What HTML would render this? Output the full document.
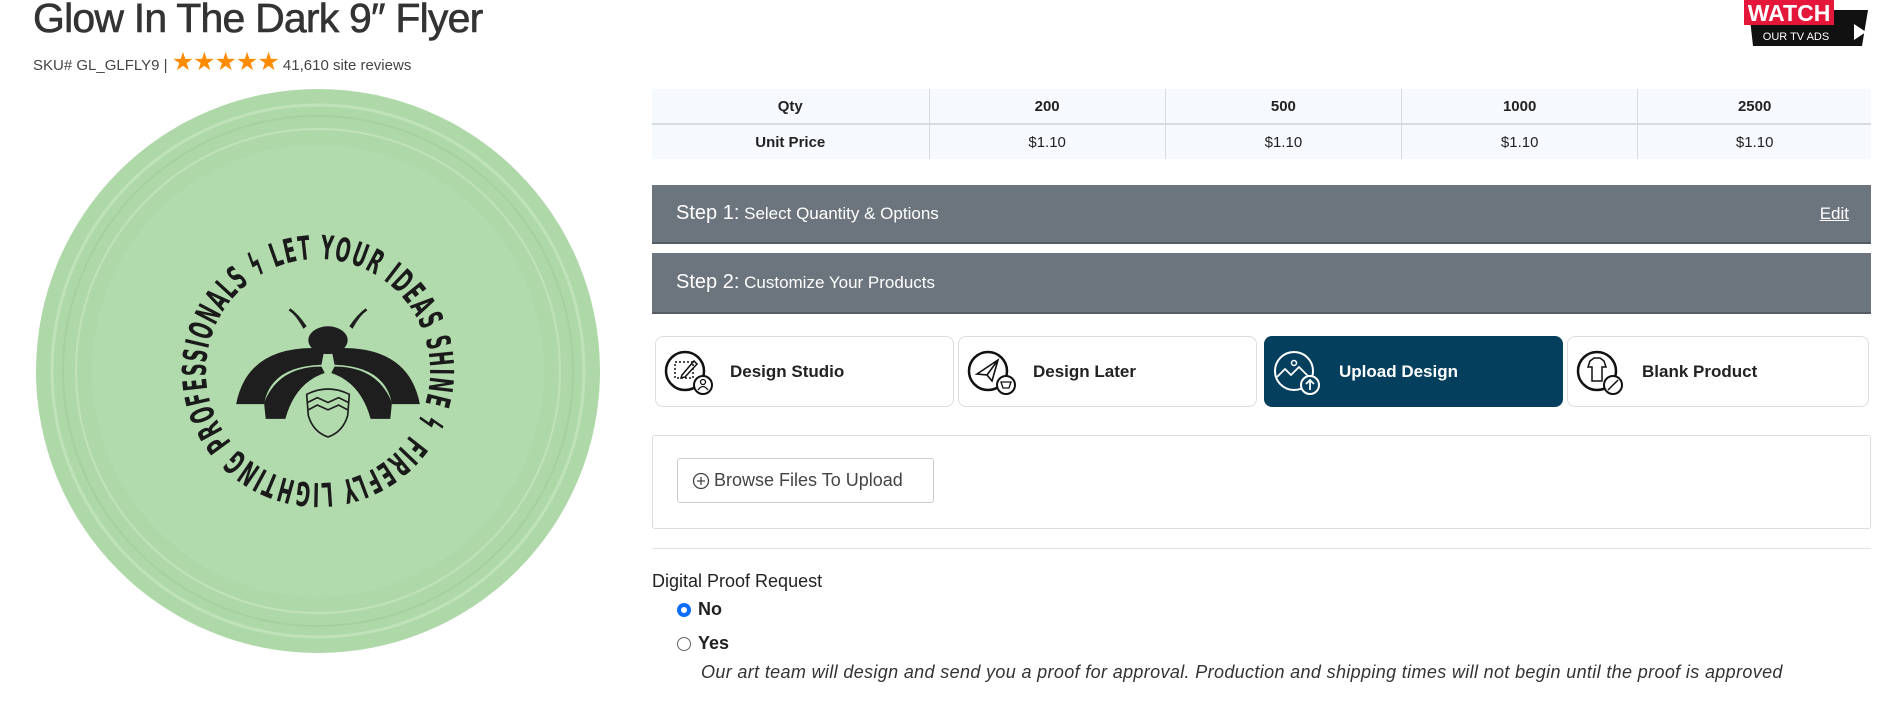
<!DOCTYPE html>
<html><head><meta charset="utf-8"><style>
*{margin:0;padding:0;box-sizing:border-box}
body{width:1902px;height:702px;overflow:hidden;background:#fff;font-family:"Liberation Sans",sans-serif;color:#333;position:relative}
.a{position:absolute}
h1{position:absolute;left:33px;top:-5px;font-size:41px;font-weight:normal;color:#333;letter-spacing:-0.8px;white-space:nowrap;-webkit-text-stroke:0.6px #333}
.sku{left:33px;top:47px;font-size:15px;color:#444;white-space:nowrap}
.stars{color:#ff8c00;font-size:25px;letter-spacing:-1px}
table{position:absolute;left:652px;top:89px;width:1219px;border-collapse:collapse;background:#f6f9fd;font-size:15px}
td{height:35px;text-align:center;border-left:1px solid #d8dce0;color:#222}
tr:first-child td{border-bottom:2px solid #d8dce0;height:35px;font-weight:bold}
td:first-child{border-left:none;font-weight:bold}
.step{left:652px;width:1219px;background:#6c757d;color:#fff;border-bottom:2px solid #555c63}
.step span.s{font-size:20px}
.step{font-size:17px;padding-left:24px;display:flex;align-items:center}
.btn{top:336px;height:71px;border:1px solid #ddd;border-radius:8px;background:#fff;display:flex;align-items:center;font-weight:bold;font-size:17px;color:#222}
.btn svg{margin-left:8px;margin-right:16px}
.box{left:652px;top:435px;width:1219px;height:94px;border:1px solid #ddd;border-radius:3px}
.browse{left:677px;top:458px;width:257px;height:45px;border:1px solid #ccc;border-radius:3px;font-size:18px;color:#444;display:flex;align-items:center;padding-left:14px}
</style></head><body>
<h1>Glow In The Dark 9″ Flyer</h1>
<div class="a sku">SKU# GL_GLFLY9 | <span class="stars">★★★★★</span> 41,610 site reviews</div>

<svg class="a" style="left:1744px;top:0" width="130" height="50">
<polygon points="5,10 124,10 118,46 9,46" fill="#111"/>
<rect x="0" y="0" width="90" height="25" fill="#e4163a"/>
<text x="45" y="21" text-anchor="middle" font-family="Liberation Sans" font-weight="bold" font-size="23" fill="#fff">WATCH</text>
<text x="52" y="40" text-anchor="middle" font-family="Liberation Sans" font-size="11" fill="#fff">OUR TV ADS</text>
<polygon points="110,24 122,32 110,40" fill="#fff"/>
</svg>

<svg class="a" style="left:28px;top:81px" width="580" height="580">
<circle cx="290" cy="290" r="282" fill="#afd8a9"/>
<circle cx="290" cy="290" r="266" fill="none" stroke="#bfe2b9" stroke-width="3"/>
<circle cx="290" cy="290" r="255" fill="none" stroke="#a6d0a0" stroke-width="2"/>
<circle cx="290" cy="290" r="242" fill="none" stroke="#bfe2b9" stroke-width="2"/>
<circle cx="290" cy="290" r="226" fill="#b1dbac"/>
<path id="tp" d="M382,354 A112,112 0 0 1 198,226 A112,112 0 0 1 382,354" fill="none"/>
<text font-family="'Liberation Sans Narrow','DejaVu Sans Condensed','Liberation Sans',sans-serif" font-weight="bold" font-size="33" fill="#1a1a1a" letter-spacing="2"><textPath href="#tp" textLength="690" lengthAdjust="spacingAndGlyphs">FIREFLY LIGHTING PROFESSIONALS ϟ LET YOUR IDEAS SHINE ϟ</textPath></text>
<g transform="translate(300,292) scale(0.82) translate(-292,-262)">
<g fill="#1e1e1e">
<path d="M262,208 Q252,190 244,186 L246,183 Q256,190 266,205Z"/>
<path d="M322,208 Q332,190 340,186 L338,183 Q328,190 318,205Z"/>
<ellipse cx="292" cy="222" rx="24" ry="17"/>
<path d="M180,300 Q194,226 288,232 L284,252 Q222,254 214,300Z"/>
<path d="M404,300 Q390,226 296,232 L300,252 Q362,254 370,300Z"/>
<path d="M214,298 Q232,254 284,254 L288,262 Q252,274 240,318 L216,318Z"/>
<path d="M370,298 Q352,254 300,254 L296,262 Q332,274 344,318 L368,318Z"/>
</g>
<path d="M266,288 Q292,275 318,288 L316,314 Q310,334 292,340 Q274,334 268,314Z" fill="none" stroke="#1e1e1e" stroke-width="2"/>
<path d="M267,298 L279,292 L292,298 L305,292 L317,298 M268,307 L279,301 L292,307 L305,301 L316,307" fill="none" stroke="#1e1e1e" stroke-width="2"/>
</g>
</svg>

<table>
<tr><td style="width:277px">Qty</td><td>200</td><td>500</td><td>1000</td><td>2500</td></tr>
<tr><td>Unit Price</td><td>$1.10</td><td>$1.10</td><td>$1.10</td><td>$1.10</td></tr>
</table>

<div class="a step" style="top:185px;height:59px"><span class="s">Step 1:</span>&nbsp;Select Quantity &amp; Options<span style="position:absolute;right:22px;text-decoration:underline">Edit</span></div>
<div class="a step" style="top:253px;height:61px"><span class="s">Step 2:</span>&nbsp;Customize Your Products</div>

<div class="a btn" style="left:655px;width:299px">
<svg width="50" height="50" viewBox="0 0 50 50"><circle cx="21" cy="24" r="19" fill="none" stroke="#111" stroke-width="2.5"/><rect x="11" y="15" width="18" height="16" fill="none" stroke="#111" stroke-width="1.5" stroke-dasharray="2 2"/><path d="M18,28 L30,14 L33,17 L21,30 L17,31Z" fill="none" stroke="#111" stroke-width="1.5"/><circle cx="39" cy="38" r="9" fill="#fff" stroke="#111" stroke-width="2"/><circle cx="39" cy="35" r="2.5" fill="none" stroke="#111" stroke-width="1.3"/><path d="M34,43 Q39,36 44,43" fill="none" stroke="#111" stroke-width="1.3"/></svg>Design Studio</div>
<div class="a btn" style="left:958px;width:299px">
<svg width="50" height="50" viewBox="0 0 50 50"><circle cx="21" cy="24" r="19" fill="none" stroke="#111" stroke-width="2.5"/><path d="M10,27 L31,13 L25,34 L20,28Z M20,28 L31,13" fill="none" stroke="#111" stroke-width="1.6"/><circle cx="39" cy="38" r="9" fill="#fff" stroke="#111" stroke-width="2"/><path d="M34,35 L44,35 L42,41 L36,41Z" fill="none" stroke="#111" stroke-width="1.3"/></svg>Design Later</div>
<div class="a btn" style="left:1264px;width:299px;background:#053f5e;border-color:#053f5e;color:#fff">
<svg width="50" height="50" viewBox="0 0 50 50"><circle cx="21" cy="24" r="19" fill="none" stroke="#fff" stroke-width="2"/><circle cx="21" cy="16" r="2.5" fill="none" stroke="#fff" stroke-width="1.5"/><path d="M4,30 L12,22 L18,28 L26,20 L36,30" fill="none" stroke="#fff" stroke-width="1.8"/><circle cx="37" cy="38" r="9" fill="#053f5e" stroke="#fff" stroke-width="2"/><path d="M37,43 L37,33 M33,37 L37,33 L41,37" fill="none" stroke="#fff" stroke-width="1.8"/></svg>Upload Design</div>
<div class="a btn" style="left:1567px;width:302px">
<svg width="50" height="50" viewBox="0 0 50 50"><circle cx="21" cy="24" r="19" fill="none" stroke="#111" stroke-width="2.5"/><path d="M14,14 L18,11 L24,11 L28,14 L30,20 L26,20 L26,34 L16,34 L16,20 L12,20Z" fill="none" stroke="#111" stroke-width="1.5"/><circle cx="37" cy="38" r="9" fill="#fff" stroke="#111" stroke-width="2"/><path d="M32,43 L42,33" stroke="#111" stroke-width="1.5"/></svg>Blank Product</div>

<div class="a box"></div>
<div class="a browse"><svg width="18" height="18" style="margin-right:4px"><circle cx="9" cy="9" r="7.5" fill="none" stroke="#444" stroke-width="1.3"/><path d="M9,5 V13 M5,9 H13" stroke="#444" stroke-width="1.3"/></svg>Browse Files To Upload</div>
<div class="a" style="left:652px;top:548px;width:1219px;height:1px;background:#e2e2e2"></div>
<div class="a" style="left:652px;top:571px;font-size:18px;color:#222">Digital Proof Request</div>
<div class="a" style="left:676px;top:599px;font-size:18px;font-weight:bold;color:#222;display:flex;align-items:center"><svg width="16" height="16" style="margin-right:6px"><circle cx="8" cy="8" r="7" fill="#0d6efd"/><circle cx="8" cy="8" r="3" fill="#fff"/></svg>No</div>
<div class="a" style="left:676px;top:633px;font-size:18px;font-weight:bold;color:#222;display:flex;align-items:center"><svg width="16" height="16" style="margin-right:6px"><circle cx="8" cy="8" r="6.5" fill="#fff" stroke="#666" stroke-width="1"/></svg>Yes</div>
<div class="a" style="left:701px;top:662px;font-size:18px;font-style:italic;color:#333;white-space:nowrap;letter-spacing:0.35px">Our art team will design and send you a proof for approval. Production and shipping times will not begin until the proof is approved</div>
</body></html>
